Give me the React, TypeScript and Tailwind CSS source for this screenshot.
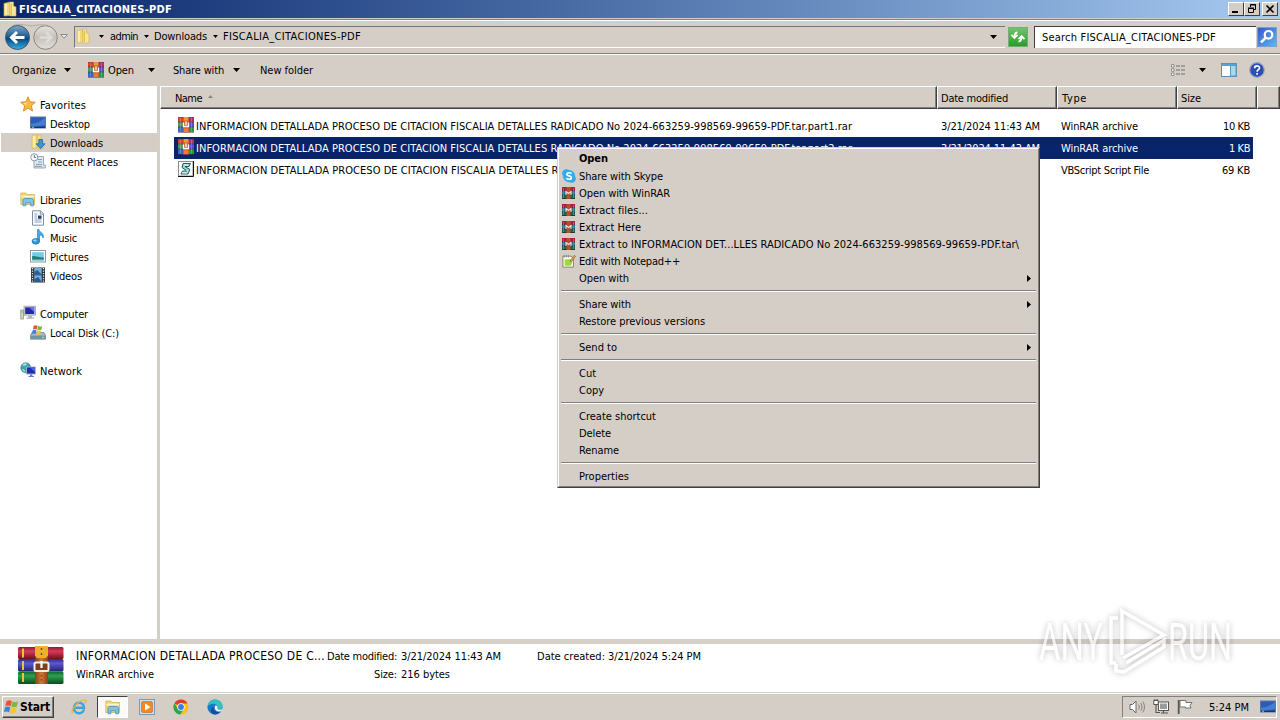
import { useLayoutEffect, useRef, type ReactNode } from 'react';
import { clsx } from 'clsx';

interface LabelProps {
  children: string;
  width: number;
  className?: string;
}

// Text tracked to an exact pixel width, the way the bitmap UI font sets it
function Label({ children, width, className }: LabelProps) {
  const ref = useRef<HTMLSpanElement>(null);

  useLayoutEffect(() => {
    const el = ref.current;
    if (!el) return;
    el.style.letterSpacing = '0px';
    const natural = el.getBoundingClientRect().width;
    el.style.letterSpacing = `${(width - natural) / children.length}px`;
  }, [children, width]);

  return (
    <span ref={ref} className={clsx('inline-block w-fit shrink-0 whitespace-pre', className)}>
      {children}
    </span>
  );
}

interface IconProps {
  className?: string;
}

function Svg({ className, children, box = '0 0 16 16' }: IconProps & { children: ReactNode; box?: string }) {
  return (
    <svg className={clsx('shrink-0', className ?? 'size-4')} viewBox={box} fill="none">
      {children}
    </svg>
  );
}

function RarIcon({ className }: IconProps) {
  return (
    <Svg className={className}>
      <rect x="0" y="0" width="16" height="15.5" fill="#4a2a4a" />
      <path d="M0 .3h5v4.400H0z" fill="#d8432c" />
      <path d="M11 .3h5v4.400h-5z" fill="#b3306a" />
      <path d="M0 5.300h5v4.400H0z" fill="#4b9a55" />
      <path d="M11 5.300h5v4.400h-5z" fill="#5a50c8" />
      <path d="M0 10.300h5v4.700H0z" fill="#3566c4" />
      <path d="M11 10.300h5v4.700h-5z" fill="#249a48" />
      <path d="M2.500.5v14M13.500.5v14" stroke="#fff" strokeOpacity=".22" strokeWidth="1" />
      <rect x="5" y="0" width="6" height="15.500" fill="#c8622c" />
      <rect x="6" y="0" width="4" height="3.500" fill="#ef9a2e" />
      <rect x="6" y="11.500" width="4" height="3.500" fill="#e08336" />
      <path d="M5.500 5.500v4h5v-4M8 4.500V8" stroke="#fff" strokeWidth="1.300" />
    </Svg>
  );
}

function MenuRarIcon() {
  return (
    <Svg className="mb-px h-[12px] w-[13px]" box="0 0 13 12">
      <rect width="13" height="4" fill="#a62135" />
      <rect y="4" width="13" height="4" fill="#2c7d8e" />
      <rect y="8" width="13" height="4" fill="#156b3a" />
      <path d="M0 3.8h13M0 7.8h13M0 11.6h13" stroke="#33203c" strokeWidth=".8" />
      <path d="M1.5 1v10M11.5 1v10" stroke="#3f8da8" strokeWidth="1" />
      <rect x="4.5" y="0" width="4" height="12" fill="#bd4a2a" />
      <path d="M4 8V4.5l2.5 2 2.5-2V8" stroke="#f2ddd0" strokeWidth="1.1" />
    </Svg>
  );
}

function RarLargeIcon() {
  return (
    <Svg className="h-[39px] w-[46px]" box="0 0 46 39">
      <defs>
        <linearGradient id="bookRed" x2="0" y2="1">
          <stop stopColor="#8e1830" />
          <stop offset=".35" stopColor="#d83a55" />
          <stop offset="1" stopColor="#6e1024" />
        </linearGradient>
        <linearGradient id="bookBlue" x2="0" y2="1">
          <stop stopColor="#2c2c86" />
          <stop offset=".35" stopColor="#5a5ad2" />
          <stop offset="1" stopColor="#22226c" />
        </linearGradient>
        <linearGradient id="bookGreen" x2="0" y2="1">
          <stop stopColor="#0c6630" />
          <stop offset=".35" stopColor="#2fa050" />
          <stop offset="1" stopColor="#0a4a20" />
        </linearGradient>
        <linearGradient id="strap" x2="1" y2="0">
          <stop stopColor="#8a4214" />
          <stop offset=".5" stopColor="#cf7a35" />
          <stop offset="1" stopColor="#8a4214" />
        </linearGradient>
      </defs>
      <rect x="0" y="1" width="45.5" height="12" rx="1.5" fill="url(#bookRed)" />
      <rect x="0" y="13" width="45.5" height="12.5" rx="1.5" fill="url(#bookBlue)" />
      <rect x="0" y="25.5" width="45.5" height="12.5" rx="1.5" fill="url(#bookGreen)" />
      <path d="M5 2.5v9M5 15v9M5 27v9" stroke="#efc23c" strokeWidth="2" />
      <rect x="17" y="10" width="13" height="28" fill="url(#strap)" />
      <path d="M17 0h13v9.500l-2 2.500h-9l-2-2.500z" fill="#edb02a" />
      <path d="M23.5 2v2M23.5 7v2M23.5 29v1.500M23.5 33v1.500" stroke="#7a4410" strokeWidth="1.400" />
      <rect x="16.500" y="16.500" width="14" height="8.500" rx="1.500" stroke="#f4efe8" strokeWidth="2" fill="#7c421b" />
      <path d="M23.5 15v7" stroke="#fff" strokeWidth="2.200" />
    </Svg>
  );
}

function FolderIcon({ className }: IconProps) {
  return (
    <Svg className={className}>
      <path d="M2 2.5 8 1v13.5L2 15z" fill="#efd878" stroke="#d9b854" strokeWidth=".6" />
      <path d="M8 1h3.5v4L14 6v9H8z" fill="#f6e69c" stroke="#d4b04c" strokeWidth=".6" />
      <path d="M4 3v11" stroke="#fff7cd" strokeWidth="1.4" />
      <path d="M9.5 3v11" stroke="#dfbd5a" strokeWidth="1" />
    </Svg>
  );
}

function ScriptIcon() {
  return (
    <Svg className="mb-[2px] size-4">
      <rect x=".5" y=".5" width="14.5" height="14.5" fill="#fff" stroke="#8c8c8c" />
      <path d="M0 15.5h15.5V0" stroke="#111" />
      <path d="M5 2.5h7.5L11 5.5H7l5 3-2 4.5H3l1.5-3H9L4 6.5z" fill="#8fd2ce" stroke="#164f52" strokeWidth=".9" />
      <path d="M6 4h4M8.5 9l1 1.5M4 11.8h5" stroke="#fff" strokeWidth=".9" />
    </Svg>
  );
}

function StarIcon() {
  return (
    <Svg>
      <path d="m8 .8 2 5 5.3.4-4 3.6 1.3 5.3L8 12.2l-4.600 2.900 1.300-5.300-4-3.600L6 5.800z" fill="#f9b93c" stroke="#d97d1a" strokeWidth=".8" />
      <path d="M8 3 6.700 6.700l-3.500.3 2.800 2z" fill="#fde9a0" />
    </Svg>
  );
}

function DesktopIcon({ className }: IconProps) {
  return (
    <Svg className={className}>
      <rect x=".5" y="2" width="15" height="11" fill="#2a5cb8" stroke="#5a74a4" />
      <path d="M1 8.500c5 .5 9-2 14-5.500v7L1 12.500z" fill="#5796dd" opacity=".6" />
      <path d="M1 12.3h14" stroke="#173066" strokeWidth="1.2" />
      <path d="M2 12.3h2" stroke="#7fd07a" />
    </Svg>
  );
}

function DownloadsIcon() {
  return (
    <Svg>
      <path d="M2 1.5 7 .8V14l-5 .5zM7 1h4v4l2 1v9H7z" fill="#f3de85" stroke="#d5b554" strokeWidth=".6" />
      <path d="M4 2v11" stroke="#fff6ce" strokeWidth="1.2" />
      <path d="M8.8 5.5h3.6v4.3H15l-4.400 5-4.400-5h2.600z" fill="#3f94d9" stroke="#1f64aa" strokeWidth=".8" />
    </Svg>
  );
}

function RecentIcon() {
  return (
    <Svg>
      <path d="M4 3.5h9.5V12h1.8v3H4z" fill="#dce7ef" stroke="#8797a5" strokeWidth=".8" />
      <path d="M8 6.5h4M8 9h4M6 11.5h6M5 13.4h7" stroke="#7f96ab" strokeWidth=".9" />
      <circle cx="4.3" cy="4.3" r="3.6" fill="#f3f7fa" stroke="#8a9aa8" />
      <path d="M4.3 2v2.5H6" stroke="#50697e" strokeWidth=".9" />
    </Svg>
  );
}

function LibrariesIcon({ className }: IconProps) {
  return (
    <Svg className={className}>
      <path d="M.8 13.5V2h5l1 1.5h7.7v10z" fill="#efd67a" stroke="#cfac48" strokeWidth=".7" />
      <path d="M1.3 5.5h13" stroke="#fff5c4" strokeWidth="1.6" />
      <path d="M3 14.8V9.5C3 8 4 7.5 5 7.5h6.5c1 0 2 .5 2 2v5.3h-2.8v-3H5.8v3z" fill="#7cc3ec" stroke="#3888bc" strokeWidth=".7" />
    </Svg>
  );
}

function DocumentIcon() {
  return (
    <Svg>
      <path d="M2.5.8h8l3 3v11.4h-11z" fill="#fbfdff" stroke="#7e8fa6" />
      <path d="M10.3.8v3.3h3.2" stroke="#7e8fa6" />
      <path d="M4.5 4h3M4.5 6h2.5M4.5 8h2.5M4.5 10h7M4.5 12h7" stroke="#7d92b5" strokeWidth=".9" />
      <rect x="8" y="5.5" width="3.5" height="3.3" fill="#24466f" />
    </Svg>
  );
}

function MusicIcon() {
  return (
    <Svg>
      <path d="M7.500.5H9c.5 3 5.600 3.500 4.200 8.500-.6-2-2-2.800-3.700-3v6.500h-2z" fill="#49a7e2" stroke="#2a84c8" strokeWidth=".7" />
      <ellipse cx="5.800" cy="12.300" rx="3.800" ry="2.900" fill="#2e96dc" stroke="#1b6fae" strokeWidth=".6" />
      <ellipse cx="5" cy="11.500" rx="1.600" ry=".9" fill="#9bd7f7" />
    </Svg>
  );
}

function PicturesIcon() {
  return (
    <Svg>
      <rect x=".5" y="2.500" width="15" height="11.500" fill="#fff" stroke="#8b98a3" />
      <rect x="2.200" y="4.200" width="11.600" height="8" fill="#7cc8ea" />
      <path d="M2.200 8c3-.5 6 1 11.600 1.500v2.700H2.200z" fill="#2b7d70" />
      <path d="M2.200 11.600h11.600" stroke="#3aa7d8" strokeWidth="1.200" />
    </Svg>
  );
}

function VideosIcon() {
  return (
    <Svg>
      <rect x="1" y=".5" width="14" height="15" fill="#2d3238" />
      <path d="M2.500 1v14M13.500 1v14" stroke="#e3e7ea" strokeWidth="1.300" strokeDasharray="1.300 1.200" />
      <rect x="4.300" y="1" width="7.400" height="6.500" fill="#6fb0de" />
      <rect x="4.300" y="8.300" width="7.400" height="6.700" fill="#6fb0de" />
      <path d="m4.300 5 3-2 4.400 4.500H4.300zM4.300 12l4-2 3.400 5H4.300z" fill="#2c5c93" />
    </Svg>
  );
}

function ComputerIcon() {
  return (
    <Svg>
      <rect x="4" y="1.200" width="11.500" height="9" fill="#c8d0dc" stroke="#8b97aa" strokeWidth=".7" />
      <rect x="5.200" y="2.400" width="9" height="6.600" fill="#2527a8" />
      <path d="m9 2.400 5.200 0V7z" fill="#6a74e0" />
      <path d="M8 10.500h4v2h2v1.300H6.300v-1.300H8z" fill="#aeb6c2" />
      <rect x=".8" y="5" width="2.600" height="9" fill="#cfd9c4" stroke="#7c8a76" strokeWidth=".7" />
      <path d="M1.500 7h1.200" stroke="#3fae47" />
    </Svg>
  );
}

function WindowsFlag() {
  return (
    <>
      <path d="M1.500 2.200c2-1.200 3.600-1 5.400 0L5.600 7.300c-1.800-1-3.300-1-5.300 0z" fill="#e8562a" />
      <path d="M7.600 2.500c1.800.9 3.400.9 5.500-.2l-1.300 5.200c-2 1-3.700 1-5.500 0z" fill="#7db73c" />
      <path d="M.1 8.200c2-1 3.500-1 5.300 0l-1.300 5c-1.800-1-3.400-1-5.300 0z" fill="#3d84d6" />
      <path d="M6.100 8.500c1.800.9 3.500.9 5.500-.1l-1.300 5c-2 1.100-3.800 1-5.500.1z" fill="#f6c52f" />
    </>
  );
}

function DiskIcon() {
  return (
    <Svg>
      <path d="M2 8.500h12l1.700 3v3.700H.4v-3.700z" fill="#a9bac4" stroke="#66798a" strokeWidth=".7" />
      <path d="M.6 11.600h15v3.300H.6z" fill="#6f95a5" />
      <path d="M12 13.300h2" stroke="#a9f08e" />
      <g transform="translate(2.600 .2) scale(.74)">
        <WindowsFlag />
      </g>
    </Svg>
  );
}

function NetworkIcon() {
  return (
    <Svg>
      <circle cx="5.800" cy="5.800" r="5" fill="#3f9fb5" stroke="#2c7690" strokeWidth=".6" />
      <path d="M2 3c2-2 4-2 5-1-1 2-3 2-5 1zM2 7c2 0 3 1 3.500 3L3 9z" fill="#a8e6c0" />
      <rect x="6.500" y="5" width="9" height="7" fill="#1f2da8" stroke="#a9b5d4" strokeWidth=".9" />
      <path d="m10 5.600 5 0V10z" fill="#4f67de" />
      <path d="M10 12.200h2.300V14H14v1H8.500v-1H10z" fill="#6f7ec8" />
    </Svg>
  );
}

function SkypeIcon() {
  return (
    <Svg className="mb-px size-[14px]">
      <circle cx="5" cy="5" r="4.800" fill="#2aa6ea" />
      <circle cx="11" cy="11" r="4.800" fill="#2aa6ea" />
      <circle cx="8" cy="8" r="7" fill="#31adf0" />
      <path d="M10.800 5.300C9.800 3.800 5.500 3.800 5.500 6c0 2.300 5.200 1.400 5.200 4 0 2.300-4.600 2.200-5.600.4" stroke="#fff" strokeWidth="1.800" />
    </Svg>
  );
}

function NotepadIcon() {
  return (
    <Svg className="mb-px size-[14px]">
      <path d="M1 2.500h9.500l2.500 3V15H1z" fill="#fdfdf2" stroke="#77775f" />
      <path d="M3 6h7c2 0 1.500 6 0 7.500H3z" fill="#a2d743" />
      <path d="M2.500 1v3M5 1v3M7.500 1v3" stroke="#888" />
      <path d="m9 8 5-6.500 1.500 1L10.700 9z" fill="#f0a94c" stroke="#634b2a" strokeWidth=".6" />
    </Svg>
  );
}

function Caret({ className }: IconProps) {
  return (
    <Svg className={className ?? 'h-1 w-[7px]'} box="0 0 7 4">
      <path d="M0 0h7L3.500 4z" fill="#000" />
    </Svg>
  );
}

interface TitleButtonProps {
  children: ReactNode;
  className?: string;
}

function TitleButton({ children, className }: TitleButtonProps) {
  return (
    <button className={clsx('flex h-[14px] w-4 items-center justify-center border border-t-white border-r-[#404040] border-b-[#404040] border-l-white bg-[#d5cec7]', className)}>
      <svg className="h-[10px] w-3 shrink-0" viewBox="0 0 12 10" fill="none" stroke="#000">
        {children}
      </svg>
    </button>
  );
}

function TitleBar() {
  return (
    <header className="flex h-[18px] items-center bg-linear-to-r from-[#0a246a] to-[#a6caf0] pr-[2px] pl-[2px]">
      <FolderIcon />
      <Label width={153} className="ml-px pt-px font-bold text-white">FISCALIA_CITACIONES-PDF</Label>
      <div className="ml-auto flex">
        <TitleButton><path d="M2 8h6" strokeWidth="2" /></TitleButton>
        <TitleButton>
          <path d="M4.500 3V.500h5v5H8M4 1h6" />
          <path d="M2.500 4.500h5v4h-5zM2 4h6" />
        </TitleButton>
        <TitleButton className="ml-[2px]"><path d="m2.500 1.500 7 7M9.500 1.500l-7 7" strokeWidth="1.600" /></TitleButton>
      </div>
    </header>
  );
}

function NavButtons() {
  return (
    <div className="flex w-[70px] shrink-0 items-center">
      <svg className="h-[28px] w-[56px] shrink-0" viewBox="0 0 56 28" fill="none">
        <defs>
          <linearGradient id="backFill" x2="0" y2="1">
            <stop stopColor="#7fa9c6" />
            <stop offset=".45" stopColor="#1e5f97" />
            <stop offset=".55" stopColor="#0b4680" />
            <stop offset="1" stopColor="#36b2e8" />
          </linearGradient>
          <linearGradient id="nextFill" x2="0" y2="1">
            <stop stopColor="#e6e4e0" />
            <stop offset=".5" stopColor="#c3c0ba" />
            <stop offset="1" stopColor="#e2e0dc" />
          </linearGradient>
        </defs>
        <path d="M10 2.500C16 0 24 2.500 29 3c5-1 10-2 16-.5" stroke="#b1ada5" />
        <circle cx="14.500" cy="14.500" r="12" fill="url(#backFill)" stroke="#3f5a72" />
        <path d="M21.500 14.500H9M14 9l-5.500 5.500L14 20" stroke="#fff" strokeWidth="3" />
        <circle cx="42.500" cy="14.500" r="11.800" fill="url(#nextFill)" stroke="#8c8982" />
        <path d="M36.500 14.500H48M43 9.500l5.500 5-5.500 5" stroke="#dedbd6" strokeWidth="2.500" />
      </svg>
      <svg className="ml-px h-[5px] w-2 shrink-0" viewBox="0 0 8 5" fill="#eee" stroke="#777">
        <path d="M.7.500h6.600L4 4.300z" strokeWidth=".8" />
      </svg>
    </div>
  );
}

function AddressBar() {
  return (
    <div className="flex h-[35px] items-center border-y border-t-[#808080] border-b-[#808080] pl-[3px] shadow-[inset_0_1px_0_#fff,0_1px_0_#fff]">
      <NavButtons />
      <div className="ml-px flex h-[22px] w-[931px] items-center border-t border-b border-l border-t-[#6f7780] border-b-white border-l-[#6f7780] pr-[8px]">
        <FolderIcon className="mb-px size-4" />
        <Caret className="mr-[6px] ml-[8px] h-[3px] w-[5px]" />
        <Label width={28}>admin</Label>
        <Caret className="mr-[5px] ml-[6px] h-[3px] w-[5px]" />
        <Label width={53}>Downloads</Label>
        <Caret className="mr-[5px] ml-[6px] h-[3px] w-[5px]" />
        <Label width={138}>FISCALIA_CITACIONES-PDF</Label>
        <Caret className="ml-auto h-1 w-[7px]" />
      </div>
      <div className="ml-[3px] h-5 w-5 shrink-0 border border-[#7ca87f] bg-linear-to-b from-[#6fc36a] to-[#22a022]">
        <svg className="size-[18px]" viewBox="0 0 18 18" fill="none" stroke="#fff" strokeWidth="1.800">
          <path d="M8.500 4.500c-2 0-3 1.500-3 4.500M2.500 6.800 5.500 10l3-3.200M9.500 13.500c2 0 3-1.500 3-4.500M9.500 11.200l3-3.200 3 3.200" />
        </svg>
      </div>
      <div className="ml-[6px] flex h-[22px] w-[222px] items-center border-t border-l border-[#404040] bg-white pl-[7px]">
        <Label width={174} className="pt-px">Search FISCALIA_CITACIONES-PDF</Label>
      </div>
      <div className="ml-px h-5 w-5 border border-[#7d9fd0] bg-linear-to-br from-[#3a55cc] to-[#5db8f0]">
        <svg className="size-[18px]" viewBox="0 0 18 18" fill="none" stroke="#fff" strokeWidth="2.200">
          <circle cx="10.500" cy="6.800" r="3.800" />
          <path d="m7.500 9.800-4.500 4.500" strokeWidth="2.600" />
        </svg>
      </div>
    </div>
  );
}

function CommandBar() {
  return (
    <div className="mb-px flex h-[30px] items-center pl-3">
      <Label width={44} className="pt-[2px]">Organize</Label>
      <Caret className="ml-2 h-1 w-[7px]" />
      <RarIcon className="ml-[17px] size-4" />
      <Label width={26} className="ml-[4px] pt-[2px]">Open</Label>
      <Caret className="ml-[14px] h-1 w-[7px]" />
      <Label width={51} className="ml-[18px] pt-[2px]">Share with</Label>
      <Caret className="ml-[9px] h-1 w-[7px]" />
      <Label width={53} className="ml-5 pt-[2px]">New folder</Label>
      <div className="ml-auto flex items-center pr-[15px]">
        <Svg className="size-4">
          <path d="M1.500 2.500h2.500v2.500H1.500zM1.500 6.800h2.500v2.500H1.500zM1.500 11h2.500v2.500H1.500z" fill="#fff" stroke="#858585" strokeWidth=".9" />
          <path d="M6 4h4M11 4h4M6 8h4M11 8h4M6 12h4M11 12h4" stroke="#6f6f6f" />
        </Svg>
        <Caret className="ml-[13px] h-1 w-[7px]" />
        <Svg className="ml-[15px] size-4">
          <rect x=".5" y="1.500" width="15" height="13" fill="#fff" stroke="#5e8fb2" />
          <path d="M.5 3h15" stroke="#5aa2cd" strokeWidth="2" />
          <rect x="9.500" y="3.500" width="5.500" height="10.500" fill="#a9d8ef" stroke="#5b9cc3" />
        </Svg>
        <Svg className="ml-[12px] size-4">
          <circle cx="8" cy="8" r="7.300" fill="#2d4fb4" stroke="#9aa6c2" strokeWidth="1.200" />
          <path d="M5.600 6.300C5.600 3 10.600 3.200 10.500 6c0 1.600-2.400 1.800-2.400 3.700M8.100 11v1.700" stroke="#fff" strokeWidth="1.700" />
        </Svg>
      </div>
    </div>
  );
}

interface TreeItem {
  label: string;
  width: number;
  icon: ReactNode;
  root?: boolean;
  selected?: boolean;
}

const tree: TreeItem[][] = [
  [
    { label: 'Favorites', width: 46, icon: <StarIcon />, root: true },
    { label: 'Desktop', width: 40, icon: <DesktopIcon /> },
    { label: 'Downloads', width: 53, icon: <DownloadsIcon />, selected: true },
    { label: 'Recent Places', width: 68, icon: <RecentIcon /> },
  ],
  [
    { label: 'Libraries', width: 41, icon: <LibrariesIcon />, root: true },
    { label: 'Documents', width: 54, icon: <DocumentIcon /> },
    { label: 'Music', width: 27, icon: <MusicIcon /> },
    { label: 'Pictures', width: 39, icon: <PicturesIcon /> },
    { label: 'Videos', width: 32, icon: <VideosIcon /> },
  ],
  [
    { label: 'Computer', width: 48, icon: <ComputerIcon />, root: true },
    { label: 'Local Disk (C:)', width: 69, icon: <DiskIcon /> },
  ],
  [{ label: 'Network', width: 42, icon: <NetworkIcon />, root: true }],
];

function Sidebar() {
  return (
    <nav className="flex w-[160px] shrink-0 flex-col gap-[19px] border-r-[3px] border-[#d4d0c8] bg-white pt-[9px] pl-px">
      {tree.map((group) => (
        <ul key={group[0].label}>
          {group.map((item) => (
            <li
              key={item.label}
              className={clsx('flex h-[19px] items-center pb-px', item.root ? 'pl-[19px]' : 'pl-[29px]', item.selected && 'bg-[#d5cec7]')}
            >
              {item.icon}
              <Label width={item.width} className="ml-1 pt-[4px]">{item.label}</Label>
            </li>
          ))}
        </ul>
      ))}
    </nav>
  );
}

interface HeadCellProps {
  children?: ReactNode;
  className?: string;
}

function HeadCell({ children, className }: HeadCellProps) {
  return (
    <div className={clsx('flex items-center border border-t-white border-r-[#404040] border-b-[#404040] border-l-white pt-[3px] shadow-[inset_-1px_-1px_0_#808080]', className)}>
      {children}
    </div>
  );
}

const files = [
  { part: '.part1.rar', width: 656, type: 'WinRAR archive', typeWidth: 77, size: '10 KB', sizeWidth: 27 },
  { part: '.part2.rar', width: 656, type: 'WinRAR archive', typeWidth: 77, size: '1 KB', sizeWidth: 21, selected: true },
  { part: '.vbs', width: 631, type: 'VBScript Script File', typeWidth: 88, size: '69 KB', sizeWidth: 28 },
];

function FileList() {
  return (
    <section className="min-w-0 flex-1 bg-white">
      <div className="flex h-[23px] bg-[#d5cec7]">
        <HeadCell className="w-[777px] pl-[14px]">
          <Label width={27}>Name</Label>
          <svg className="mb-[5px] ml-[6px] h-[3px] w-[5px]" viewBox="0 0 5 3" fill="#8a8780"><path d="M0 3h5L2.500 0z" /></svg>
        </HeadCell>
        <HeadCell className="w-[120px] pl-[3px]"><Label width={67}>Date modified</Label></HeadCell>
        <HeadCell className="w-[120px] pl-[4px]"><Label width={25}>Type</Label></HeadCell>
        <HeadCell className="w-[80px] pl-[3px]"><Label width={20}>Size</Label></HeadCell>
        <HeadCell className="flex-1" />
      </div>
      <ul className="pt-[6px] pl-[14px]">
        {files.map((file) => (
          <li key={file.part} className={clsx('flex h-[22px] w-[1079px] items-center pr-[3px] pl-1', file.selected && 'bg-[#0a246a] text-white')}>
            {file.type === 'WinRAR archive' ? <RarIcon className="mb-[2px] size-4" /> : <ScriptIcon />}
            <div className="ml-[2px] flex flex-1 items-center pt-[2px]">
              <div className="w-[745px] shrink-0">
                <Label width={file.width}>{`INFORMACION DETALLADA PROCESO DE CITACION FISCALIA DETALLES RADICADO No 2024-663259-998569-99659-PDF.tar${file.part}`}</Label>
              </div>
              <div className="w-[120px] shrink-0"><Label width={99}>3/21/2024 11:43 AM</Label></div>
              <Label width={file.typeWidth}>{file.type}</Label>
              <Label width={file.sizeWidth} className="ml-auto">{file.size}</Label>
            </div>
          </li>
        ))}
      </ul>
    </section>
  );
}

interface MenuItem {
  label: string;
  width: number;
  icon?: ReactNode;
  bold?: boolean;
  submenu?: boolean;
}

const menu: MenuItem[][] = [
  [
    { label: 'Open', width: 29, bold: true },
    { label: 'Share with Skype', width: 84, icon: <SkypeIcon /> },
    { label: 'Open with WinRAR', width: 91, icon: <MenuRarIcon /> },
    { label: 'Extract files...', width: 69, icon: <MenuRarIcon /> },
    { label: 'Extract Here', width: 62, icon: <MenuRarIcon /> },
    { label: 'Extract to INFORMACION DET...LLES RADICADO No 2024-663259-998569-99659-PDF.tar\\', width: 440, icon: <MenuRarIcon /> },
    { label: 'Edit with Notepad++', width: 101, icon: <NotepadIcon /> },
    { label: 'Open with', width: 50, submenu: true },
  ],
  [
    { label: 'Share with', width: 52, submenu: true },
    { label: 'Restore previous versions', width: 126 },
  ],
  [{ label: 'Send to', width: 38, submenu: true }],
  [
    { label: 'Cut', width: 17 },
    { label: 'Copy', width: 25 },
  ],
  [
    { label: 'Create shortcut', width: 77 },
    { label: 'Delete', width: 32 },
    { label: 'Rename', width: 40 },
  ],
  [{ label: 'Properties', width: 50 }],
];

function ContextMenu() {
  return (
    <div className="absolute top-[147px] left-[557px] h-[341px] w-[483px] border border-t-[#d4d0c8] border-r-[#404040] border-b-[#404040] border-l-[#d4d0c8] bg-[#d5cec7]">
      <div className="h-full border border-t-white border-r-[#808080] border-b-[#808080] border-l-white px-px pt-px">
        {menu.map((group, index) => (
          <div key={group[0].label}>
            {index > 0 && (
              <div className="h-[9px] px-px pt-[3px]">
                <div className="h-[2px] border-b border-white bg-[#808080]" />
              </div>
            )}
            {group.map((item) => (
              <div key={item.label} className={clsx('flex items-center', item.bold ? 'h-[18px] font-bold' : 'h-[17px]')}>
                <div className="flex w-[19px] shrink-0 pl-[2px]">{item.icon}</div>
                <Label width={item.width}>{item.label}</Label>
                {item.submenu && (
                  <svg className="mr-[6px] ml-auto h-[7px] w-1" viewBox="0 0 4 7"><path d="M0 0v7l4-3.500z" /></svg>
                )}
              </div>
            ))}
          </div>
        ))}
      </div>
    </div>
  );
}

function DetailsPane() {
  return (
    <section className="flex h-[53px] border-t-[5px] border-[#d4d0c8] bg-white pl-[18px]">
      <div className="pt-[2px]"><RarLargeIcon /></div>
      <div className="ml-[12px] flex w-[251px] flex-col items-start">
        <Label width={249} className="mt-[3px] h-[18px] text-[12px] leading-[18px]">INFORMACION DETALLADA PROCESO DE C...</Label>
        <Label width={78} className="mt-px h-[18px] leading-[18px]">WinRAR archive</Label>
      </div>
      <dl className="grid h-[40px] w-[210px] grid-cols-[70px_1fr] grid-rows-[18px_18px] gap-x-1 pt-[4px] leading-[18px]">
        <dt className="flex justify-end"><Label width={70}>Date modified:</Label></dt>
        <dd className="flex"><Label width={100}>3/21/2024 11:43 AM</Label></dd>
        <dt className="flex justify-end"><Label width={23}>Size:</Label></dt>
        <dd className="flex"><Label width={49}>216 bytes</Label></dd>
      </dl>
      <div className="flex pt-[4px] leading-[18px]">
        <Label width={68}>Date created:</Label>
        <Label width={93} className="ml-[3px]">3/21/2024 5:24 PM</Label>
      </div>
    </section>
  );
}

function Taskbar() {
  return (
    <footer className="flex h-[28px] items-center border-t border-[#d4d0c8] bg-[#d5cec7] pr-[3px] pl-[2px] shadow-[inset_0_1px_0_#fff]">
      <button className="flex h-[22px] w-[52px] items-center border border-t-white border-r-[#404040] border-b-[#404040] border-l-white pl-px shadow-[inset_-1px_-1px_0_#808080]">
        <Svg className="size-[15px]" box="-1 0 15 15"><WindowsFlag /></Svg>
        <Label width={30} className="ml-px text-[12px] font-bold">Start</Label>
      </button>
      <Svg className="ml-[17px] size-4">
        <path d="M13 10.300c-1 3-3.300 4-5.200 4C5 14.300 3 12 3 9s2-5.200 5-5.200 5 2 5 5H4.500" stroke="#38a7dc" strokeWidth="2.400" />
        <path d="M1.500 14.500C-1 11 9-.5 14.500 1.200c1 .5.600 2-.5 3.300" stroke="#e9b13b" strokeWidth="1.200" />
      </Svg>
      <div className="ml-[10px] flex h-[22px] w-[31px] items-center justify-center border border-t-[#404040] border-r-white border-b-white border-l-[#404040] bg-[#fbfaf8]">
        <LibrariesIcon />
      </div>
      <Svg className="ml-[11px] size-4">
        <rect x=".5" y=".5" width="15" height="15" fill="#cfe0ef" stroke="#6e9cc4" />
        <rect x="2.500" y="2.500" width="11" height="11" rx="1.500" fill="#f08a1d" stroke="#c5670c" strokeWidth=".6" />
        <path d="M6 4.500v7L11.500 8z" fill="#fff" />
      </Svg>
      <Svg className="ml-[18px] size-4">
        <circle cx="8" cy="8" r="7.600" fill="#fbc116" />
        <path d="M8 8 1.400 4.200A7.600 7.600 0 0 1 14.600 4.400H8z" fill="#e33b2e" />
        <path d="M1.400 4.200A7.600 7.600 0 0 0 7.400 15.600l3.400-5.800L8 8l-3.200 1.800z" fill="#2da44e" />
        <circle cx="8" cy="8" r="3.700" fill="#fff" />
        <circle cx="8" cy="8" r="2.900" fill="#3b7de8" />
      </Svg>
      <Svg className="ml-[18px] size-4">
        <circle cx="8" cy="8" r="7.600" fill="#1b79c9" />
        <path d="M.5 7.500C1 3 4.500.4 8.300.4c4.500 0 7.300 3.200 7.300 6.600 0 3-2.600 4-4.600 3.600-1-.3-1-.8-.6-1.500C11.500 7 9 4.500 6 4.700 3.500 4.800 1.500 6 .5 7.500z" fill="#35c1c0" />
        <path d="M6.500 7.500c-.8 3.500 2 6 7.200 4.800-2 3-5 3.500-7 3C3 14 3.500 9 6.500 7.500z" fill="#124f9e" />
        <path d="M8 7c1-1.200 3 0 2.400 2-.5 1 .6 1.600 2 1.700 1.300.1 2.300-.3 3-1-.3 1.300-.8 2-1.300 2.600C10 13.500 7 11 8 7z" fill="#eef7fb" />
      </Svg>
      <div className="ml-auto flex h-[22px] w-[155px] items-center border border-t-[#808080] border-r-white border-b-white border-l-[#808080] pl-[6px]">
        <Svg className="size-4">
          <path d="M1 5.500h2.500L7 2v12l-3.500-3.500H1z" fill="#fff" stroke="#6a6a6a" />
          <path d="M9.500 5.500c1 1.500 1 3.500 0 5M11.500 4c2 2.500 2 5.500 0 8M13.700 2.500c2.300 3 2.300 8 0 11" stroke="#777" strokeWidth=".9" />
        </Svg>
        <Svg className="ml-2 size-4">
          <rect x="5.500" y="3" width="10" height="8.500" fill="#fff" stroke="#555" />
          <rect x="7" y="4.500" width="7" height="5.500" fill="#9b9b9b" />
          <path d="M8 14h7M10.500 11.500V14" stroke="#555" strokeWidth="1.200" />
          <path d="M.8 1.500h4.400v4H.8z" fill="#fff" stroke="#555" />
          <path d="M3 5.500v8h4M1.800 0v2M4.200 0v2" stroke="#555" strokeWidth="1.100" />
        </Svg>
        <Svg className="ml-2 size-4">
          <path d="M1.700 1v14" stroke="#555" strokeWidth="1.800" />
          <path d="M3 1.500h6v2h6l-2 3 1 2.500H8.500V8H3z" fill="#fff" stroke="#666" strokeWidth=".9" />
        </Svg>
        <Label width={40} className="ml-4 pt-[2px]">5:24 PM</Label>
        <DesktopIcon className="ml-[11px] size-4" />
      </div>
    </footer>
  );
}

function Watermark() {
  return (
    <div className="pointer-events-none absolute top-[603px] left-[1030px] opacity-65">
      <svg className="h-[76px] w-[215px] overflow-visible drop-shadow-[0_0_3px_rgba(0,0,0,0.4)]" viewBox="0 0 215 76" fill="none">
        <g fill="#fff" fontFamily="Roboto, sans-serif" fontSize="51">
          <text x="9" y="57" textLength="64" lengthAdjust="spacingAndGlyphs">ANY</text>
          <text x="138" y="57" textLength="64" lengthAdjust="spacingAndGlyphs">RUN</text>
        </g>
        <path d="M88 15h-7v45h5M92 52V8l42 24-41 23M86 61v7l8 1 40-25v-7L96 60" stroke="#fff" strokeWidth="3.500" />
      </svg>
    </div>
  );
}

export default function App() {
  return (
    <main className="relative flex h-[720px] w-[1280px] flex-col overflow-hidden bg-[#d5cec7] font-['DejaVu_Sans_Condensed','DejaVu_Sans',sans-serif] text-[11px] leading-[14px] text-black">
      <TitleBar />
      <div className="mt-px">
        <AddressBar />
      </div>
      <div className="mt-px">
        <CommandBar />
      </div>
      <div className="flex min-h-0 flex-1">
        <Sidebar />
        <FileList />
      </div>
      <DetailsPane />
      <Taskbar />
      <ContextMenu />
      <Watermark />
    </main>
  );
}
